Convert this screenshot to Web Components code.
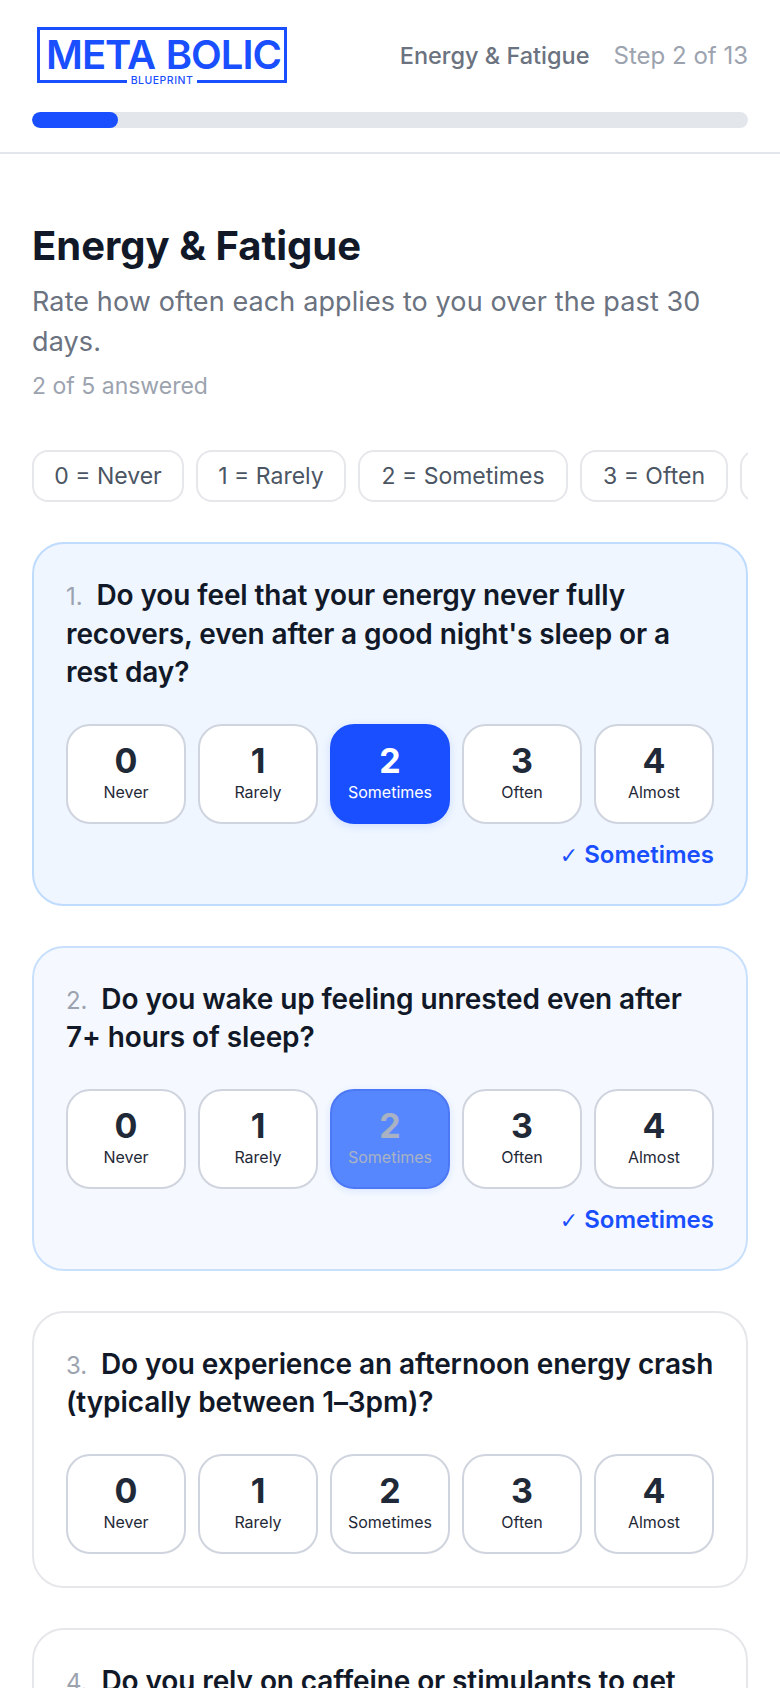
<!DOCTYPE html>
<html lang="en">
<head>
<meta charset="utf-8">
<title>Energy &amp; Fatigue</title>
<style>
  html, body { margin: 0; height: 1688px; overflow: hidden; background: #fff; }
  body { font-family: Inter, "Liberation Sans", sans-serif; color: #111827; }
</style>
</head>
<body>
<quiz-header section="Energy &amp; Fatigue" step="Step 2 of 13" progress="86"></quiz-header>
<quiz-page>
  <section-intro title="Energy &amp; Fatigue" subtitle="Rate how often each applies to you over the past 30 days." count="2 of 5 answered"></section-intro>
  <scale-legend></scale-legend>
  <question-card n="1" text="Do you feel that your energy never fully recovers, even after a good night's sleep or a rest day?" value="2" state="active"></question-card>
  <question-card n="2" text="Do you wake up feeling unrested even after 7+ hours of sleep?" value="2" state="fading"></question-card>
  <question-card n="3" text="Do you experience an afternoon energy crash (typically between 1–3pm)?"></question-card>
  <question-card n="4" text="Do you rely on caffeine or stimulants to get" noscale></question-card>
</quiz-page>

<script>
const LABELS = ['Never', 'Rarely', 'Sometimes', 'Often', 'Almost']
const PILL_WIDTHS = [152, 150, 210, 148, 150]

customElements.define('brand-logo', class extends HTMLElement {
  constructor() {
    super()
    this.attachShadow({ mode: 'open' }).innerHTML = `
<style>
  :host { display: block; width: 250px; height: 56px; position: relative; box-sizing: border-box; border: 3px solid #1a4fff; color: #1a4fff; }
  .word { display: flex; justify-content: space-between; padding: 7px 3px 0 6px; font: 600 40px/36px Inter, sans-serif; letter-spacing: -1px; }
  .sub { position: absolute; left: 0; right: 0; bottom: -7px; text-align: center; font: 500 10.5px/12px Inter, sans-serif; letter-spacing: .5px; }
  .sub span { background: #fff; padding: 0 4px; }
</style>
<div class="word"><span>META</span><span>BOLIC</span></div>
<div class="sub"><span>BLUEPRINT</span></div>`
  }
})

customElements.define('quiz-header', class extends HTMLElement {
  constructor() {
    super()
    this.attachShadow({ mode: 'open' }).innerHTML = `
<style>
  :host { display: block; box-sizing: border-box; height: 154px; padding: 27px 32px 0; border-bottom: 2px solid #e3e7ec; background: #fff; }
  .top { display: flex; align-items: center; justify-content: space-between; padding-left: 5px; height: 56px; }
  .meta { display: flex; gap: 24px; margin-top: 1px; font-size: 24px; line-height: 28px; }
  .section { color: #6b7280; font-size: 23.5px; font-weight: 500; }
  .step { color: #9ca3af; }
  .track { height: 16px; margin-top: 29px; background: #e3e7ec; border-radius: 8px; overflow: hidden; }
  .fill { height: 100%; background: #1a4fff; border-radius: 8px; }
</style>
<div class="top">
  <brand-logo></brand-logo>
  <div class="meta"><span class="section"></span><span class="step"></span></div>
</div>
<div class="track"><div class="fill"></div></div>`
    this.shadowRoot.querySelector('.section').textContent = this.getAttribute('section')
    this.shadowRoot.querySelector('.step').textContent = this.getAttribute('step')
    this.shadowRoot.querySelector('.fill').style.width = this.getAttribute('progress') + 'px'
  }
})

customElements.define('quiz-page', class extends HTMLElement {
  constructor() {
    super()
    this.attachShadow({ mode: 'open' }).innerHTML = `
<style>
  :host { display: flex; flex-direction: column; gap: 40px; padding: 68px 32px 0; }
</style>
<slot></slot>`
  }
})

customElements.define('section-intro', class extends HTMLElement {
  constructor() {
    super()
    this.attachShadow({ mode: 'open' }).innerHTML = `
<style>
  :host { display: block; margin-bottom: 9px; }
  h1 { margin: 0; font-size: 40px; line-height: 48px; font-weight: 700; color: #111827; }
  p { margin: 12px 0 0; font-size: 27px; line-height: 40px; letter-spacing: .11px; color: #6b7280; }
  small { display: block; margin-top: 9px; font-size: 23px; line-height: 30px; color: #9ca3af; }
</style>
<h1></h1><p></p><small></small>`
    this.shadowRoot.querySelector('h1').textContent = this.getAttribute('title')
    this.shadowRoot.querySelector('p').textContent = this.getAttribute('subtitle')
    this.shadowRoot.querySelector('small').textContent = this.getAttribute('count')
  }
})

customElements.define('scale-legend', class extends HTMLElement {
  constructor() {
    super()
    this.attachShadow({ mode: 'open' }).innerHTML = `
<style>
  :host { display: flex; gap: 12px; overflow: hidden; }
  span { flex: none; box-sizing: border-box; height: 52px; display: flex; align-items: center; justify-content: center; border: 2px solid #e5e7eb; border-radius: 16px; background: #fff; font-size: 23px; color: #4b5563; white-space: nowrap; }
</style>`
    LABELS.forEach((label, i) => {
      const pill = document.createElement('span')
      pill.textContent = i + ' = ' + label
      pill.style.width = PILL_WIDTHS[i] + 'px'
      this.shadowRoot.append(pill)
    })
  }
})

customElements.define('scale-button', class extends HTMLElement {
  constructor() {
    super()
    this.attachShadow({ mode: 'open' }).innerHTML = `
<style>
  :host { display: flex; flex-direction: column; align-items: center; justify-content: center; box-sizing: border-box; height: 100px; border: 2px solid #cfd4de; border-radius: 24px; background: #fff; color: #1f2937; }
  :host([state="active"]) { background: #1a4fff; border-color: #1a4fff; color: #fff; box-shadow: 0 2px 8px rgba(26,79,255,.15); }
  :host([state="fading"]) { background: #5787ff; border-color: #4c78f5; color: #a9b2c3; box-shadow: 0 2px 8px rgba(26,79,255,.12); }
  b { font-size: 34px; line-height: 38px; font-weight: 700; margin-top: -3px; }
  span { font-size: 16px; line-height: 22px; margin-top: 1px; font-weight: 400; }
</style>
<b></b><span></span>`
  }
  connectedCallback() {
    this.shadowRoot.querySelector('b').textContent = this.getAttribute('num')
    this.shadowRoot.querySelector('span').textContent = this.getAttribute('label')
  }
})

customElements.define('question-card', class extends HTMLElement {
  constructor() {
    super()
    this.attachShadow({ mode: 'open' }).innerHTML = `
<style>
  :host { display: block; box-sizing: border-box; padding: 32px; border: 2px solid #e5e7eb; border-radius: 32px; background: #fff; }
  :host([state="active"]) { background: #eff6ff; border-color: #bfdbfe; }
  :host([state="fading"]) { background: #f5f9ff; border-color: #c9e0fd; }
  .q { margin: 0; font-size: 28px; line-height: 38.5px; font-weight: 600; letter-spacing: -.1px; color: #111827; }
  .n { margin-right: 14px; font-size: 24px; line-height: 0; font-weight: 400; color: #9ca3af; }
  .scale { display: grid; grid-template-columns: repeat(5, 1fr); gap: 12px; margin-top: 32px; }
  .picked { margin-top: 14px; text-align: right; font-size: 24px; line-height: 34px; font-weight: 600; color: #1a4fff; }
  .tick { font: 400 22px/0 "DejaVu Sans", sans-serif; }
</style>
<p class="q"><span class="n"></span><span class="t"></span></p>
<div class="scale"></div>`
  }
  connectedCallback() {
    const root = this.shadowRoot
    root.querySelector('.n').textContent = this.getAttribute('n') + '.'
    root.querySelector('.t').textContent = this.getAttribute('text')
    if (this.hasAttribute('noscale')) return
    const value = this.getAttribute('value')
    LABELS.forEach((label, i) => {
      const btn = document.createElement('scale-button')
      btn.setAttribute('num', i)
      btn.setAttribute('label', label)
      if (String(i) === value) btn.setAttribute('state', this.getAttribute('state'))
      root.querySelector('.scale').append(btn)
    })
    if (value !== null) {
      const picked = document.createElement('div')
      picked.className = 'picked'
      picked.innerHTML = '<span class="tick">✓</span> ' + LABELS[value]
      root.append(picked)
    }
  }
})
</script>
</body>
</html>
